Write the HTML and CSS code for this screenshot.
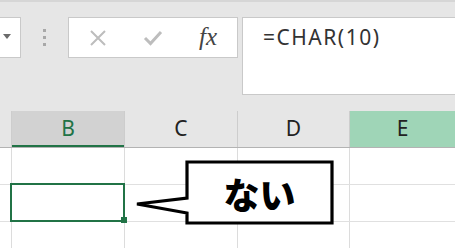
FILE: index.html
```html
<!DOCTYPE html>
<html lang="ja">
<head>
    <meta charset="UTF-8">
    <title>CHAR(10)</title>
    <link rel="stylesheet" href="styles.css">
</head>
<body>
    <div class="toolbar">
        <div class="name-box">
            <span class="drop"></span>
        </div>
        <div class="grip">
            <span></span><span></span><span></span>
        </div>
        <div class="fx-buttons">
            <svg class="icon" width="18" height="18" viewBox="0 0 18 18">
                <path d="M2 2 L16 16 M16 2 L2 16" stroke="#bdbdbd" stroke-width="2" fill="none"/>
            </svg>
            <svg class="icon" width="20" height="18" viewBox="0 0 20 18">
                <path d="M2 9 L7.5 14.5 L18 3" stroke="#bdbdbd" stroke-width="3" fill="none"/>
            </svg>
            <span class="fx">fx</span>
        </div>
        <div class="formula">=CHAR(10)</div>
    </div>

    <div class="sheet">
        <div class="row head">
            <div class="cell corner"></div>
            <div class="cell b active">B</div>
            <div class="cell c">C</div>
            <div class="cell d">D</div>
            <div class="cell e picked">E</div>
        </div>
        <div class="row">
            <div class="cell corner"></div>
            <div class="cell b"></div>
            <div class="cell c"></div>
            <div class="cell d"></div>
            <div class="cell e"></div>
        </div>
        <div class="row">
            <div class="cell corner"></div>
            <div class="cell b selected"></div>
            <div class="cell c"></div>
            <div class="cell d"></div>
            <div class="cell e"></div>
        </div>
        <div class="row">
            <div class="cell corner"></div>
            <div class="cell b"></div>
            <div class="cell c"></div>
            <div class="cell d"></div>
            <div class="cell e"></div>
        </div>

        <!-- 吹き出し -->
        <div class="callout">
            <svg width="200" height="70" viewBox="0 0 200 70">
                <polygon points="52,4 197,4 197,65 52,65 52,55 2,46 52,40" fill="#fff" stroke="#000" stroke-width="3.2" stroke-linejoin="miter"/>
            </svg>
            <div class="callout-text">ない</div>
        </div>
    </div>
</body>
</html>
```

FILE: styles.css
```css
body {
    margin: 0;
    width: 455px;
    height: 248px;
    overflow: hidden;
    background: #fff;
    font-family: 'Noto Sans', sans-serif;
}
.toolbar {
    height: 111px;
    background: #e6e6e6;
    border-top: 2px solid #d6d6d6;
    display: flex;
    align-items: flex-start;
    padding-top: 15px;
    box-sizing: border-box;
}
.name-box {
    width: 20px;
    height: 39px;
    background: #fff;
    border: 1px solid #c9c9c9;
    border-left: none;
    flex-shrink: 0;
    position: relative;
}
.drop {
    position: absolute;
    left: 3px;
    top: 16px;
    border-left: 4px solid transparent;
    border-right: 4px solid transparent;
    border-top: 5px solid #6b6b6b;
}
.grip {
    width: 47px;
    flex-shrink: 0;
    display: flex;
    flex-direction: column;
    align-items: center;
    gap: 4px;
    padding-top: 12px;
}
.grip span {
    width: 3px;
    height: 3px;
    background: #a8a8a8;
}
.fx-buttons {
    width: 148px;
    height: 39px;
    background: #fff;
    border: 1px solid #c9c9c9;
    flex-shrink: 0;
    display: flex;
    align-items: center;
    padding-left: 20px;
}
.fx-buttons .icon {
    margin-right: 36px;
}
.fx-buttons .icon + .icon {
    margin-right: 36px;
}
.fx {
    font-family: 'Liberation Serif', serif;
    font-style: italic;
    font-size: 25px;
    color: #444;
    margin-top: -2px;
}
.formula {
    margin-left: 4px;
    flex: 1;
    height: 78px;
    background: #fff;
    border: 1px solid #c9c9c9;
    border-right: none;
    font-size: 21px;
    line-height: 24px;
    letter-spacing: 1.5px;
    color: #333;
    padding: 7px 0 0 20px;
    box-sizing: border-box;
}
.sheet {
    position: relative;
}
.row {
    display: flex;
    height: 37px;
    box-sizing: border-box;
    border-bottom: 1px solid #e0e0e0;
}
.cell {
    border-right: 1px solid #dcdcdc;
    box-sizing: border-box;
    flex-shrink: 0;
}
.corner { width: 12px; }
.b { width: 113px; }
.c { width: 113px; }
.d { width: 112px; }
.e { width: 105px; border-right: none; }
.head {
    background: #e6e6e6;
    border-bottom: 1px solid #b3b3b3;
}
.head .cell {
    text-align: center;
    font-size: 21px;
    line-height: 35px;
    color: #222;
    border-right-color: #cdcdcd;
}
.head .active {
    background: #d2d2d2;
    color: #217346;
    box-shadow: inset 0 -2px 0 #217346;
}
.head .picked {
    background: #9fd5b7;
}
.selected {
    position: relative;
}
.selected::after {
    content: '';
    position: absolute;
    left: -2px;
    top: -2px;
    right: -1px;
    bottom: -1px;
    border: 2px solid #217346;
}
.selected::before {
    content: '';
    position: absolute;
    right: -3px;
    bottom: -2px;
    width: 6px;
    height: 6px;
    background: #217346;
    z-index: 1;
}
.callout {
    position: absolute;
    left: 135px;
    top: 47px;
    width: 200px;
    height: 70px;
}
.callout svg {
    display: block;
}
.callout-text {
    position: absolute;
    left: 52px;
    top: 4px;
    width: 145px;
    height: 61px;
    display: flex;
    align-items: center;
    justify-content: center;
    font-family: 'Noto Sans CJK JP', sans-serif;
    font-weight: 900;
    font-size: 36px;
    color: #000;
}
```
